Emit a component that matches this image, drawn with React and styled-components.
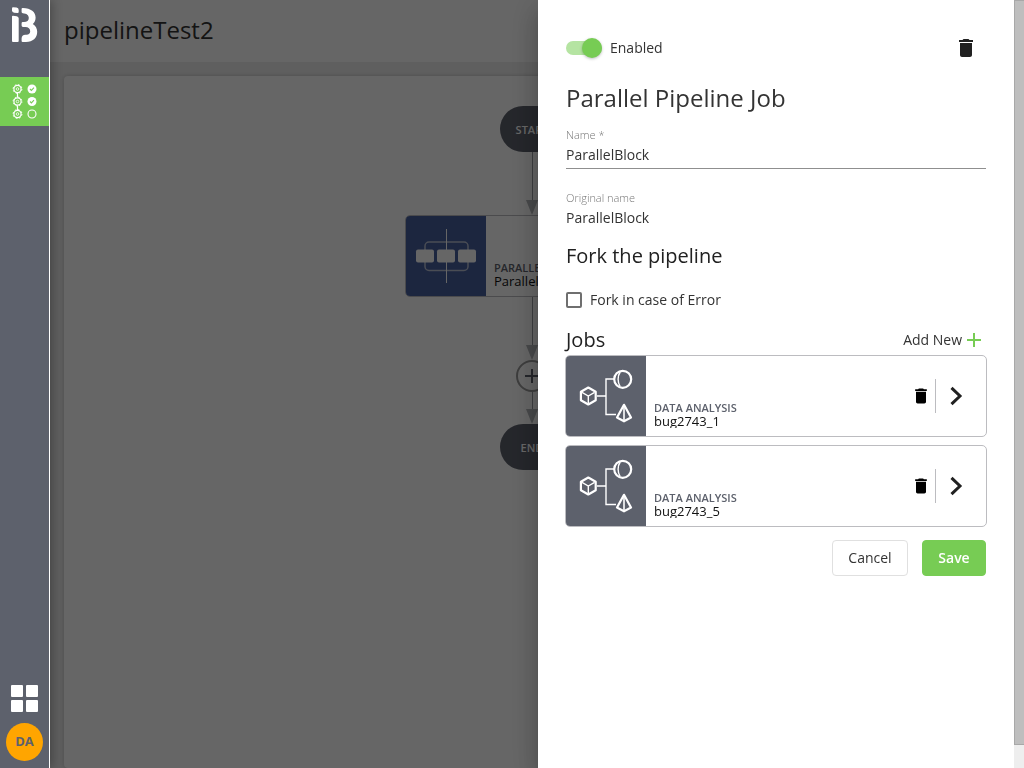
import React, { useState } from "react";
import styled, { createGlobalStyle, ThemeProvider } from "styled-components";

const theme = {
  green: "#77cc54",
  greenLight: "#b5e4a2",
  slate: "#5d616c",
  text: "#333",
  muted: "#777",
  line: "#bcbcc0",
  blue: "#475f9f",
  orange: "#ffa500",
};

const GlobalStyle = createGlobalStyle`
  * {
    box-sizing: border-box;
  }

  body {
    margin: 0;
    overflow: hidden;
    font-family: "Open Sans", "Noto Sans", sans-serif;
    font-size: 14px;
    color: #333;
  }

  button,
  input {
    font: inherit;
    color: inherit;
  }
`;

const Shell = styled.div`
  display: flex;
  height: 100vh;
`;

const Sidebar = styled.nav`
  position: relative;
  z-index: 2;
  display: flex;
  flex-direction: column;
  flex: 0 0 50px;
  background: ${({ theme }) => theme.slate};
  border-right: 1px solid #fff;
  box-shadow: 2px 0 10px rgba(0, 0, 0, 0.3);
`;

const LogoLink = styled.a`
  display: block;
  height: 77px;
`;

const NavLink = styled.a`
  display: block;
  height: 49px;
  background: ${({ theme }) => theme.green};
`;

const AppsButton = styled.button`
  display: flex;
  justify-content: center;
  margin: auto 0 11px;
  padding: 0;
  border: 0;
  background: none;
  cursor: pointer;
`;

const Avatar = styled.button`
  width: 37px;
  height: 38px;
  margin: 0 0 7px 6px;
  padding: 0 0 2px;
  border: 0;
  border-radius: 50%;
  background: ${({ theme }) => theme.orange};
  color: ${({ theme }) => theme.slate};
  font-size: 13px;
  font-weight: 700;
  cursor: pointer;
`;

const Main = styled.main`
  display: flex;
  flex-direction: column;
  flex: 1;
  min-width: 0;
  background: #eee;
`;

const Header = styled.header`
  display: flex;
  align-items: center;
  height: 62px;
  padding: 0 14px 2px;
  background: #fff;
`;

const PageTitle = styled.h1`
  margin: 0;
  font-size: 24px;
  font-weight: 400;
  line-height: 32px;
`;

const Canvas = styled.section`
  display: flex;
  flex-direction: column;
  align-items: center;
  flex: 1;
  margin: 14px 24px 0 14px;
  padding-top: 30px;
  border-radius: 4px;
  background: #fff;
  box-shadow: 0 0 4px rgba(0, 0, 0, 0.2);
`;

const Terminal = styled.div`
  display: flex;
  align-items: center;
  justify-content: center;
  width: 64px;
  height: 46px;
  border-radius: 23px;
  background: ${({ theme }) => theme.slate};
  color: #fff;
  font-size: 11px;
  font-weight: 600;
`;

const AddNode = styled.button`
  display: flex;
  align-items: center;
  justify-content: center;
  width: 32px;
  height: 32px;
  padding: 0;
  border: 2px solid #9a9a9a;
  border-radius: 50%;
  background: none;
`;

const Backdrop = styled.div`
  position: fixed;
  inset: 0;
  z-index: 1;
  background: rgba(0, 0, 0, 0.6);
`;

const Drawer = styled.aside`
  position: fixed;
  top: 0;
  right: 0;
  bottom: 0;
  z-index: 3;
  display: flex;
  width: 486px;
  max-width: 100%;
  background: #fff;
  box-shadow: 0 8px 10px -5px rgba(0, 0, 0, 0.2),
    0 16px 24px 2px rgba(0, 0, 0, 0.14), 0 6px 30px 5px rgba(0, 0, 0, 0.12);
`;

const Form = styled.form`
  flex: 1;
  min-width: 0;
  padding: 28px;
`;

const ScrollTrack = styled.div`
  flex: 0 0 10px;
  background: #eee;
`;

const ScrollThumb = styled.div`
  height: 97%;
  border: 1px solid #a8a8a8;
  border-right: 0;
  background: #bebebe;
`;

const Row = styled.div`
  display: flex;
  align-items: center;
  justify-content: space-between;
  height: ${({ $height }) => $height}px;
`;

const ControlLabel = styled.label`
  display: flex;
  align-items: center;
  gap: 8px;
  line-height: 24px;
`;

const Switch = styled.input`
  appearance: none;
  display: flex;
  align-items: center;
  width: 36px;
  height: 14px;
  margin: 0;
  border-radius: 7px;
  background: ${({ checked, theme }) =>
    checked ? theme.greenLight : "#9e9e9e"};

  &::before {
    content: "";
    width: 20px;
    height: 20px;
    margin-left: ${({ checked }) => (checked ? "auto" : 0)};
    border-radius: 50%;
    background: ${({ checked, theme }) => (checked ? theme.green : "#fafafa")};
    box-shadow: 0 1px 3px rgba(0, 0, 0, 0.25);
  }
`;

const Checkbox = styled.input`
  appearance: none;
  width: 16px;
  height: 16px;
  margin: 0;
  border: 2px solid #6f6f6f;
  border-radius: 2px;

  &:checked {
    background: ${({ theme }) => theme.green};
  }
`;

const IconButton = styled.button`
  display: flex;
  align-items: center;
  justify-content: center;
  width: ${({ $width }) => $width}px;
  height: 34px;
  padding: 0;
  border: 0;
  background: none;
  cursor: pointer;
`;

const DrawerTitle = styled.h2`
  margin: 14px 0 13px;
  font-size: 24px;
  font-weight: 400;
  line-height: 32px;
`;

const Heading = styled.h3`
  margin: 0;
  color: #212121;
  font-size: 20px;
  font-weight: 500;
  line-height: 28px;
`;

const Field = styled.div`
  display: flex;
  flex-direction: column;
  margin-bottom: ${({ $gap }) => $gap}px;
`;

const FieldLabel = styled.label`
  color: ${({ theme }) => theme.muted};
  font-size: 11px;
  font-weight: 300;
  line-height: 16px;
`;

const TextInput = styled.input`
  height: 26px;
  padding: 0 0 2px;
  border: 0;
  border-bottom: 1px solid #8f8f8f;
  outline: 0;
  background: none;
`;

const FieldValue = styled.output`
  line-height: 24px;
`;

const Option = styled.div`
  margin: 18px 0 14px;
`;

const AddJob = styled.button`
  display: flex;
  align-items: center;
  padding: 0;
  border: 0;
  background: none;
  line-height: 24px;
  cursor: pointer;
`;

const JobList = styled.div`
  display: grid;
  gap: 8px;
  margin: 1px -1px 13px;
`;

const Block = styled.div`
  display: flex;
  width: ${({ $width }) => $width || "auto"};
  height: 82px;
  overflow: hidden;
  border: 1px solid ${({ theme }) => theme.line};
  border-radius: 5px;
  background: #fff;
`;

const BlockIcon = styled.div`
  flex: 0 0 80px;
  background: ${({ $color, theme }) => theme[$color]};
`;

const BlockText = styled.div`
  display: flex;
  flex-direction: column;
  justify-content: flex-end;
  flex: 1;
  min-width: 0;
  padding: 8px;
`;

const BlockType = styled.span`
  color: ${({ theme }) => theme.slate};
  font-size: 11px;
  font-weight: 600;
  line-height: 12px;
  text-transform: uppercase;
`;

const BlockName = styled.span`
  overflow: hidden;
  font-size: 13px;
  line-height: 14px;
  color: #111;
`;

const BlockActions = styled.div`
  display: flex;
  align-items: center;
  padding-right: 10px;
`;

const Divider = styled.span`
  width: 1px;
  height: 34px;
  background: ${({ theme }) => theme.line};
`;

const Footer = styled.div`
  display: flex;
  justify-content: flex-end;
  gap: 14px;
`;

const Button = styled.button`
  min-width: ${({ $primary }) => ($primary ? 64 : 76)}px;
  height: 36px;
  padding: 0 15px 2px;
  border: 1px solid ${({ $primary, theme }) => ($primary ? theme.green : "#e0e0e0")};
  border-radius: 4px;
  background: ${({ $primary, theme }) => ($primary ? theme.green : "#fff")};
  color: ${({ $primary, theme }) => ($primary ? "#fff" : theme.text)};
  font-weight: ${({ $primary }) => ($primary ? 600 : 400)};
  cursor: pointer;
`;

const Logo = () => (
  <svg width="49" height="50" viewBox="0 0 49 50" fill="#fff">
    <path d="M12 8.6Q12 7.1 13.2 7.2L16.5 7.6Q18.7 8 18.7 10V12Q18.7 13.2 17.5 13.1L14.2 12.7Q12 12.3 12 10.5Z" />
    <path d="M12 16.6Q12 15.7 13 15.8L16.6 16.3Q18.7 16.7 18.7 18.6V41Q18.7 42 17.7 42H13Q12 42 12 41Z" />
    <path d="M21.6 9Q21.6 7.8 22.8 7.9C31 8.2 35.6 11.8 35.6 17.4C35.6 20.2 34.6 22.3 32.8 23.9C35.6 25.6 37.2 28.3 37.2 31.8C37.2 38 32.8 42 26 42H22.6Q21.6 42 21.6 41V38.6C21.6 36.2 23 34.8 25.4 34.8H26.6C28.8 34.8 30.2 33.6 30.2 31.3C30.2 28.6 28.4 27 25.4 27H23Q21.6 27 21.6 25.6V23.2Q21.6 22 22.8 22H24C27 22 28.8 20.4 28.8 18C28.8 15.2 26.7 13.4 22.8 13.2Q21.6 13.1 21.6 12Z" />
  </svg>
);

const PipelinesIcon = () => (
  <svg width="49" height="49" viewBox="0 0 49 49" fill="none" stroke="#fff">
    <path d="M17.5 16V20.5M17.5 28.5V33" strokeWidth="1.2" />
    {[12, 24.5, 37].map((y) => (
      <g key={y}>
        <circle cx="17.5" cy={y} r="3.6" strokeWidth="1.2" />
        <circle cx="17.5" cy={y} r="4.4" strokeWidth="1" strokeDasharray="1.7 1.75" />
        <circle cx="17.5" cy={y} r="1.3" strokeWidth="0.8" />
      </g>
    ))}
    {[12, 24.5].map((y) => (
      <g key={y}>
        <circle cx="32" cy={y} r="4.5" fill="#fff" stroke="none" />
        <path d={`M30 ${y}l1.4 1.4 2.6-2.7`} stroke="#77cc54" strokeWidth="1.1" />
      </g>
    ))}
    <circle cx="32" cy="37" r="4" strokeWidth="1.1" />
  </svg>
);

const AppsIcon = () => (
  <svg width="27" height="27" viewBox="0 0 27 27" fill="#fff">
    <rect width="12" height="12" rx="1" />
    <rect x="15" width="12" height="12" rx="1" />
    <rect y="15" width="12" height="12" rx="1" />
    <rect x="15" y="15" width="12" height="12" rx="1" />
  </svg>
);

const TrashIcon = ({ size, color }) => (
  <svg width={size} height={size} viewBox="0 0 24 24" fill={color}>
    <path d="M6 19c0 1.1.9 2 2 2h8c1.1 0 2-.9 2-2V7H6v12zM19 4h-3.5l-1-1h-5l-1 1H5v2h14V4z" />
  </svg>
);

const PlusIcon = ({ color }) => (
  <svg width="24" height="24" viewBox="0 0 24 24" fill={color}>
    <path d="M19 13h-6v6h-2v-6H5v-2h6V5h2v6h6v2z" />
  </svg>
);

const ChevronIcon = () => (
  <svg width="14" height="20" viewBox="0 0 14 20" fill="none">
    <path d="M2.5 1.8L11 10L2.5 18.2" stroke="#212121" strokeWidth="3" />
  </svg>
);

const Arrow = ({ height }) => (
  <svg width="12" height={height} viewBox={`0 0 12 ${height}`}>
    <rect x="6" width="1" height={height - 12} fill="#9b9ea2" />
    <path d={`M0 ${height - 15}H12L6 ${height}Z`} fill="#b4b7ba" />
  </svg>
);

const ParallelIcon = () => (
  <svg width="80" height="80" viewBox="0 0 80 80" fill="none">
    <rect x="19" y="26" width="43" height="28.5" rx="4" stroke="#b9c0d3" strokeWidth="1.5" />
    <path d="M40.5 13V67" stroke="#fff" />
    {[10, 31, 52].map((x) => (
      <rect key={x} x={x} y="33.5" width="18" height="13" rx="2" fill="#fff" />
    ))}
  </svg>
);

const AnalysisIcon = () => (
  <svg width="80" height="80" viewBox="0 0 80 80" fill="none" stroke="#fff">
    <path d="M31 40H40M48 23H40V58.5H50" strokeWidth="1.4" />
    <path
      d="M22.3 31.5L29.7 35.7V44.3L22.3 48.5L14.9 44.3V35.7Z"
      strokeWidth="2.2"
      strokeLinejoin="round"
    />
    <path d="M16 36.4L22.3 40L28.6 36.4M22.3 40V47.5" strokeWidth="1.4" />
    <circle cx="56.7" cy="23.3" r="8.5" strokeWidth="2.2" />
    <path d="M54.2 16C51.4 20 51.4 26.6 54.2 30.6" strokeWidth="1.4" />
    <path
      d="M58 48.8L65 61.5L58 65.3L51 61.5Z"
      strokeWidth="2.2"
      strokeLinejoin="round"
    />
    <path d="M58 49V65" strokeWidth="1.6" />
  </svg>
);

const jobs = [
  { type: "Data Analysis", name: "bug2743_1" },
  { type: "Data Analysis", name: "bug2743_5" },
];

function Job({ job }) {
  return (
    <Block>
      <BlockIcon $color="slate">
        <AnalysisIcon />
      </BlockIcon>
      <BlockText>
        <BlockType>{job.type}</BlockType>
        <BlockName>{job.name}</BlockName>
      </BlockText>
      <BlockActions>
        <IconButton type="button" $width={28} aria-label={`Delete ${job.name}`}>
          <TrashIcon size={20} color="#000" />
        </IconButton>
        <Divider />
        <IconButton type="button" $width={40} aria-label={`Open ${job.name}`}>
          <ChevronIcon />
        </IconButton>
      </BlockActions>
    </Block>
  );
}

function JobDrawer() {
  const [enabled, setEnabled] = useState(true);
  const [name, setName] = useState("ParallelBlock");

  return (
    <Drawer>
      <Form onSubmit={(e) => e.preventDefault()}>
        <Row $height={40}>
          <ControlLabel>
            <Switch
              type="checkbox"
              role="switch"
              checked={enabled}
              onChange={(e) => setEnabled(e.target.checked)}
            />
            Enabled
          </ControlLabel>
          <IconButton type="button" $width={40} aria-label="Delete block">
            <TrashIcon size={24} color="#212121" />
          </IconButton>
        </Row>
        <DrawerTitle>Parallel Pipeline Job</DrawerTitle>
        <Field $gap={21}>
          <FieldLabel htmlFor="name">Name *</FieldLabel>
          <TextInput
            id="name"
            value={name}
            onChange={(e) => setName(e.target.value)}
          />
        </Field>
        <Field $gap={12}>
          <FieldLabel htmlFor="original">Original name</FieldLabel>
          <FieldValue id="original">ParallelBlock</FieldValue>
        </Field>
        <Heading>Fork the pipeline</Heading>
        <Option>
          <ControlLabel>
            <Checkbox type="checkbox" />
            Fork in case of Error
          </ControlLabel>
        </Option>
        <Row $height={28}>
          <Heading>Jobs</Heading>
          <AddJob type="button">
            Add New
            <PlusIcon color={theme.green} />
          </AddJob>
        </Row>
        <JobList>
          {jobs.map((job) => (
            <Job key={job.name} job={job} />
          ))}
        </JobList>
        <Footer>
          <Button type="button">Cancel</Button>
          <Button type="submit" $primary>
            Save
          </Button>
        </Footer>
      </Form>
      <ScrollTrack>
        <ScrollThumb />
      </ScrollTrack>
    </Drawer>
  );
}

function App() {
  return (
    <ThemeProvider theme={theme}>
      <GlobalStyle />
      <Shell>
        <Sidebar>
          <LogoLink href="#home" aria-label="Home">
            <Logo />
          </LogoLink>
          <NavLink href="#pipelines" aria-label="Pipelines">
            <PipelinesIcon />
          </NavLink>
          <AppsButton aria-label="Apps">
            <AppsIcon />
          </AppsButton>
          <Avatar>DA</Avatar>
        </Sidebar>
        <Main>
          <Header>
            <PageTitle>pipelineTest2</PageTitle>
          </Header>
          <Canvas>
            <Terminal>START</Terminal>
            <Arrow height={63} />
            <Block $width="254px">
              <BlockIcon $color="blue">
                <ParallelIcon />
              </BlockIcon>
              <BlockText>
                <BlockType>Parallel</BlockType>
                <BlockName>ParallelBlock</BlockName>
              </BlockText>
            </Block>
            <Arrow height={63} />
            <AddNode aria-label="Add block">
              <PlusIcon color="#5d616c" />
            </AddNode>
            <Arrow height={32} />
            <Terminal>END</Terminal>
          </Canvas>
        </Main>
        <Backdrop />
        <JobDrawer />
      </Shell>
    </ThemeProvider>
  );
}

export default App;
